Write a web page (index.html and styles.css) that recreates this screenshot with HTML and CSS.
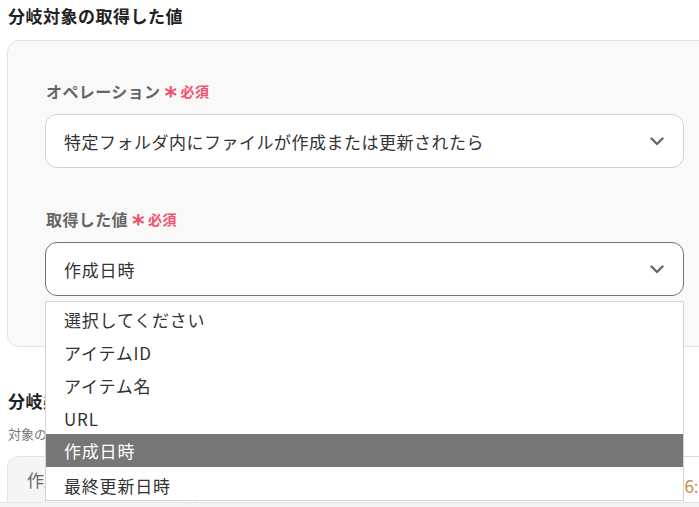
FILE: index.html
```html
<!DOCTYPE html>
<html lang="ja">
<head>
<meta charset="utf-8">
<link rel="stylesheet" href="styles.css">
</head>
<body>
<div class="page">
  <h2 class="title">分岐対象の取得した値</h2>
  <div class="card">
    <div class="field">
      <div class="label">オペレーション<span class="req"><span class="ast">*</span>必須</span></div>
      <div class="select">
        <span class="val long">特定フォルダ内にファイルが作成または更新されたら</span>
        <svg class="chev" width="14" height="9" viewBox="0 0 14 9"><path d="M1.5 1.5 L7 7 L12.5 1.5" fill="none" stroke="#666" stroke-width="2.4" stroke-linecap="round" stroke-linejoin="round"/></svg>
      </div>
    </div>
    <div class="field second">
      <div class="label">取得した値<span class="req"><span class="ast">*</span>必須</span></div>
      <div class="select-wrap">
        <div class="select focused">
          <span class="val">作成日時</span>
          <svg class="chev" width="14" height="9" viewBox="0 0 14 9"><path d="M1.5 1.5 L7 7 L12.5 1.5" fill="none" stroke="#666" stroke-width="2.4" stroke-linecap="round" stroke-linejoin="round"/></svg>
        </div>
        <ul class="list">
          <li>選択してください</li>
          <li>アイテムID</li>
          <li>アイテム名</li>
          <li>URL</li>
          <li class="active">作成日時</li>
          <li>最終更新日時</li>
        </ul>
      </div>
    </div>
  </div>
  <h2 class="title sub">分岐条件</h2>
  <p class="note">対象の値と比較する条件を設定</p>
  <div class="cond">
    <div class="cbox">作成日時</div>
    <div class="cinput"><span class="ctext">16:00</span></div>
  </div>
  <div class="foot"></div>
</div>
</body>
</html>
```
FILE: styles.css
```css
html, body {
  margin: 0;
  padding: 0;
  background: #fff;
  overflow: hidden;
}
body {
  font-family: "Noto Sans CJK JP", "Noto Sans", sans-serif;
  color: #333;
}
.page {
  width: 699px;
  height: 507px;
  overflow: hidden;
  position: relative;
}
.title {
  margin: 0;
  padding: 4px 0 0 8px;
  height: 24px;
  font-size: 17px;
  letter-spacing: 0.5px;
  line-height: 24px;
  font-weight: 700;
  color: #222;
}
.card {
  margin: 12px 0 0 7px;
  width: 760px;
  box-sizing: border-box;
  border: 1px solid #e2e2e4;
  border-radius: 12px;
  background: #f9f9fa;
  padding: 39px 0 50px 37px;
}
.field.second {
  margin-top: 40px;
}
.label {
  padding-left: 1px;
  font-size: 16px;
  letter-spacing: 0.4px;
  line-height: 22px;
  font-weight: 700;
  color: #666;
  display: flex;
  align-items: center;
}
.req {
  margin-left: 4px;
  color: #f2506b;
  font-size: 14px;
  letter-spacing: 0.5px;
  font-weight: 700;
  display: flex;
  align-items: center;
}
.ast {
  font-family: "DejaVu Sans", sans-serif;
  font-size: 24px;
  line-height: 14px;
  font-weight: 700;
  margin-right: 3px;
  position: relative;
  top: 5px;
}
.select {
  margin-top: 12px;
  width: 639px;
  height: 54px;
  box-sizing: border-box;
  border: 1px solid #cdd3dc;
  border-radius: 12px;
  background: #fff;
  display: flex;
  align-items: center;
  justify-content: space-between;
  padding: 0 19px 0 18px;
  font-size: 17px;
  letter-spacing: 0.8px;
  color: #333;
}
.val.long {
  letter-spacing: 0.5px;
}
.select.focused {
  border-color: #727272;
}
.chev {
  display: block;
}
.select-wrap {
  position: relative;
  width: 639px;
}
.list {
  position: absolute;
  left: 0;
  top: calc(100% + 5px);
  width: 639px;
  box-sizing: border-box;
  margin: 0;
  padding: 0;
  list-style: none;
  background: #fff;
  border: 1px solid #d4d4d4;
  z-index: 5;
}
.list li {
  height: 33px;
  line-height: 35px;
  padding-left: 18px;
  font-size: 17px;
  letter-spacing: 0.8px;
  color: #333;
}
.list li.active {
  background: #767676;
  color: #fff;
  line-height: 33px;
}
.list li:last-child {
  line-height: 37px;
}
.title.sub {
  margin-top: 42px;
  padding-top: 0;
}
.note {
  margin: 12px 0 0 8px;
  font-size: 13px;
  line-height: 18px;
  color: #777;
  white-space: nowrap;
}
.cond {
  margin-top: 13px;
  display: flex;
  height: 46px;
}
.cbox {
  margin-left: 7px;
  width: 173px;
  flex: none;
  box-sizing: border-box;
  border: 1px solid #e4e4e4;
  border-bottom: none;
  border-radius: 12px 0 0 0;
  background: #f5f5f5;
  padding: 10px 0 0 19px;
  font-size: 17px;
  color: #666;
  white-space: nowrap;
  overflow: hidden;
}
.cinput {
  margin-left: 15px;
  flex: 1;
  border-left: 1px solid #dcdcdc;
  border-top: 1px solid #d5dce6;
  padding: 16px 0 0 479px;
  font-size: 17px;
  color: #c98a44;
  white-space: nowrap;
  overflow: hidden;
}
.foot {
  height: 10px;
  background: #f4f4f4;
  border-top: 1px solid #e6e6e6;
}
```
